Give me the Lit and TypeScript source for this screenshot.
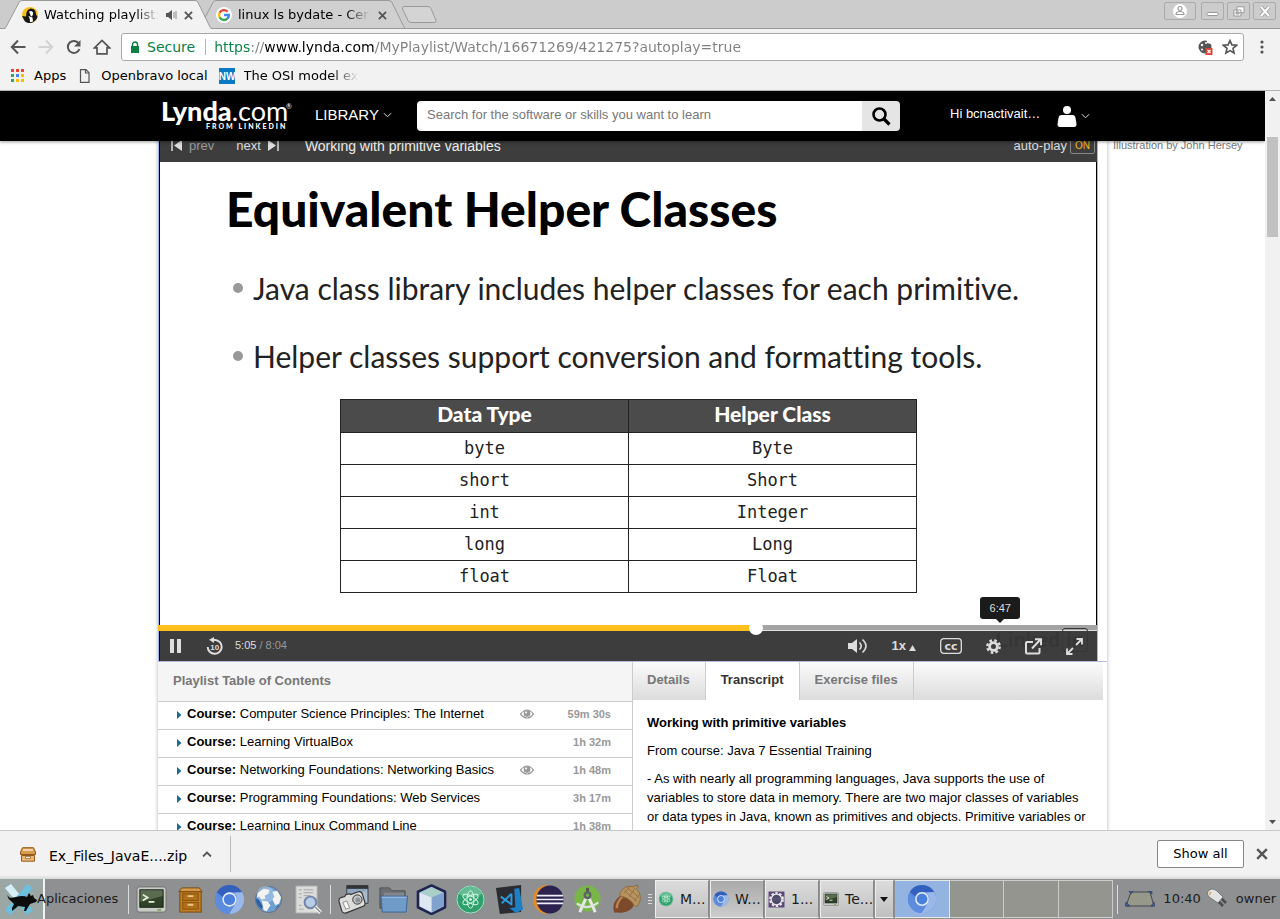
import { LitElement, html, css, svg, nothing } from "lit";
import { customElement } from "lit/decorators.js";

const chromium = svg`
  <circle cx="16" cy="16" r="15" fill="#5586db"/>
  <path d="M3 8.500A15 15 0 0 1 29 8.500L16 8.600A7.400 7.400 0 0 0 9.200 13.400z" fill="#3460bd"/>
  <path d="M29 8.500A15 15 0 0 1 15.500 31L22.400 19.700A7.400 7.400 0 0 0 20 9z" fill="#9bb8ea"/>
  <path d="M3 8.500A15 15 0 0 0 15.500 31L20 23 9 19z" fill="#5d8cdf"/>
  <circle cx="16" cy="16" r="7.400" fill="#e6edf9"/><circle cx="16" cy="16" r="5.800" fill="#4a80dc"/>`;

const terminal = svg`
  <rect x="1" y="3" width="30" height="26" rx="2.500" fill="#c9cbc6" stroke="#6f726c"/>
  <rect x="4" y="6" width="24" height="18" fill="#2f4127" stroke="#161d12"/>
  <path d="M4.500 6.500h23v6l-23 6z" fill="#5a6b50"/>
  <path d="M7 11l5 3-5 3M13 18.500h6" fill="none" stroke="#e8f2df" stroke-width="1.700"/>
  <rect x="22" y="26" width="4" height="1.500" fill="#7c9a3d"/>`;

const atom = svg`
  <circle cx="16" cy="16" r="14.500" fill="#2fa06c"/><circle cx="16" cy="16" r="14" fill="none" stroke="#b5dccb"/>
  <path d="M4 10a13.500 13.500 0 0 1 24 0q-12 8-24 0z" fill="#7cc9a4" opacity=".7"/>
  <g fill="none" stroke="#d4f5e5" stroke-width="1">
    <ellipse cx="16" cy="16" rx="3.500" ry="9"/>
    <ellipse cx="16" cy="16" rx="3.500" ry="9" transform="rotate(60 16 16)"/>
    <ellipse cx="16" cy="16" rx="3.500" ry="9" transform="rotate(120 16 16)"/>
  </g><circle cx="16" cy="16" r="1.300" fill="#fff"/>`;

const gearRing = svg`
  <rect x="1" y="1" width="30" height="30" fill="#5b4577"/>
  <circle cx="16" cy="16" r="11.500" fill="none" stroke="#e6e6e6" stroke-width="5" stroke-dasharray="4.500 2.720"/>
  <circle cx="16" cy="16" r="10" fill="#4d4769" stroke="#e6e6e6" stroke-width="2.500"/>
  <path d="M7 14h18M7 17h18" stroke="#6d6888"/>`;

const icons: Record<string, unknown> = {
  chromium, terminal, atom, gearRing,
  cabinet: svg`
    <path d="M7 4h18l3 4H4z" fill="#d49a4a" stroke="#7a4a0c"/>
    <rect x="5" y="8" width="22" height="21" fill="#c07d24" stroke="#7a4a0c"/>
    <rect x="8" y="10" width="16" height="7" fill="#b06e17" stroke="#8a560f"/>
    <rect x="8" y="19" width="16" height="7" fill="#b06e17" stroke="#8a560f"/>
    <path d="M13 12.500h6M13 21.500h6" stroke="#e8c890" stroke-width="2"/>`,
  globe: svg`
    <circle cx="16" cy="16" r="13.500" fill="#6f9fcf" stroke="#5f6f86"/>
    <circle cx="13" cy="11" r="9" fill="#a9c9e8" opacity=".6"/>
    <path d="M5 9l6-4 6 1-1 4-4 2 1 3-4 1-3-3-2 1zM9 17l6 1 3 4-4 6-3-1-1-5zM20 8l5-1 4 7-2 6-4 2-3-6 2-3z" fill="#f3f3f0"/>
    <path d="M3 15a13 13 0 0 0 6 11l1-3-4-7zM22 27a13 13 0 0 0 6-7l-3 3z" fill="#2b62a3"/>`,
  docSearch: svg`
    <path d="M4 2h22v28H4z" fill="#dcdddb" stroke="#a8a9a7"/>
    <path d="M7 6h3M7 10h3M7 14h3M12 6h10M12 9h10M12 12h7M7 22h3M7 26h5" stroke="#a4a6a5"/>
    <circle cx="19" cy="19" r="6" fill="#b9cde6" stroke="#6e84a8" stroke-width="2"/>
    <path d="M23.500 23.500l6 6" stroke="#fafafa" stroke-width="4"/><path d="M23.500 23.500l6 6" stroke="#8a8c8b" stroke-width="1.500"/>`,
  camera: svg`
    <path d="M9 1.500h22V20H9z" fill="#8fa7c0" stroke="#41464c"/><path d="M9 1.500h22V5H9z" fill="#333"/>
    <path d="M10 19L30 6v13z" fill="#a9bbcd"/>
    <path d="M1 18q-.5-3 2-4l4-1 1-2 4-1 1 1 8-3q3-.5 4 2l3 10q0 2-2 3L8 30q-3 .5-4-2z" fill="#dcdddb" stroke="#333" stroke-width="1.200"/>
    <circle cx="20" cy="16" r="4.800" fill="#c3c5c5" stroke="#333"/><circle cx="20.500" cy="16.500" r="2.600" fill="#8d9296"/>
    <path d="M5 19l4-1.500 3 7L8 26z" fill="#f6f6f6" stroke="#777" stroke-width=".8"/>`,
  folder: svg`
    <path d="M3 4h10l2 3h14v18H3z" fill="#6d7073" stroke="#505255"/>
    <path d="M7 9h21v6H7z" fill="#85888b"/>
    <path d="M4 12.500h27.500l-1.500 16.500H5.500z" fill="#6f9bc9" stroke="#3c6698"/><path d="M5 13.700h25.500" stroke="#a5c2e3"/>`,
  cube: svg`
    <path d="M16 1.500l14 6.500v16l-14 7-14-7V8z" fill="#a8c4da" stroke="#1f2450" stroke-width="2.600" stroke-linejoin="round"/>
    <path d="M16 3.500L27.500 8.500 16 14 4.500 8.500z" fill="#a9cfc8"/><path d="M16 14L28 9v14l-12 6z" fill="#7fa3cd"/>
    <path d="M16 14L4 9v14l12 6z" fill="#dfe8f2"/>`,
  vscode: svg`
    <path d="M2 4l26-3v28L6 31z" fill="#2b2c31"/>
    <path d="M21 5l5-1 4 22-7 4-7-5 6-1z" fill="#1e7fc4"/>
    <path d="M18 10v12M7 13l11 8M8 20l10-10" fill="none" stroke="#2f9be0" stroke-width="2"/>`,
  eclipse: svg`
    <path d="M15 1A15 15 0 0 0 15 31 17 17 0 0 1 15 1z" fill="#e58b22"/>
    <ellipse cx="17.500" cy="16" rx="14" ry="14.500" fill="#2b2250"/>
    <path d="M4 12h27M3.500 16h28M4 20h27" stroke="#efeef6" stroke-width="1.800"/>`,
  android: svg`
    <circle cx="16" cy="15" r="13.500" fill="#78b648"/>
    <path d="M8 29l7-16h2l7 16" fill="none" stroke="#e8eaea" stroke-width="3"/>
    <path d="M5 20q11 8 22-1" fill="none" stroke="#dfe2e2" stroke-width="2.300"/>
    <path d="M14.500 4h3v4h-3z" fill="#555"/><circle cx="16" cy="11.500" r="4" fill="#5c6468"/><circle cx="16" cy="11.500" r="1.600" fill="#78b648"/>`,
  acorn: svg`
    <path d="M12 11C5 14 1 21 3 28q.5 2 3 1.500C14 30 22 28 24 20z" fill="#7c4a2a"/>
    <path d="M12 13c-5 4-6 8-6 12" fill="none" stroke="#b98258" stroke-width="2.500"/>
    <path d="M9 11C11 4 17 1 23 3l4-2 1 2-2 2c5 4 6 12 1 18q-2 1-3-1Q20 15 12 13q-3 0-3-2z" fill="#b8935f" stroke="#8b6a3d"/>
    <path d="M14 7l13 11M17 4l12 10M13 10l6-7M19 13l6-9M24 18l5-7" stroke="#957246"/>`,
};

@customElement("app-root")
export class AppRoot extends LitElement {
  static styles = css`
    :host { display: flex; flex-direction: column; height: 100vh; overflow: hidden; background: #fff;
      font: 13px/16px "Liberation Sans", Arial, sans-serif; color: #000; }
    * { box-sizing: border-box; }
    button, input { font: inherit; color: inherit; border: 0; padding: 0; margin: 0; background: none; }
    svg { display: block; flex: none; }
    a { color: inherit; text-decoration: none; }
    h1, h2, h3, p, ul { margin: 0; padding: 0; font-weight: inherit; font-size: inherit; }
    ul { list-style: none; }

    .chrome, .downloads, .taskbar { font-family: "DejaVu Sans", sans-serif; }
    .chrome { flex: none; background: #f2f2f2; border-bottom: 1px solid #b2b2b2; }
    .strip { display: flex; height: 29px; background: #ccc; border-bottom: 1px solid #999; padding-left: 5px; }
    .tab { position: relative; display: flex; align-items: center; width: 206px; height: 29px; margin-right: -12px; padding: 1px 18px 0 17px; }
    .tab.active { z-index: 1; }
    .shape { position: absolute; inset: 0; width: 100%; height: 29px; }
    .tab > :not(.shape) { position: relative; }
    .title { flex: 1; margin-left: 6px; overflow: hidden; white-space: nowrap; text-align: left;
      mask-image: linear-gradient(to left, transparent 0, #000 24px); }
    .sound { margin: 0 7px; }
    .tab:not(.active) .close { margin-left: 8px; }
    .newtab { align-self: center; margin-left: 8px; }
    .winbtns { display: flex; gap: 3px; margin: 2px 4px 0 auto; }
    .winbtns button { width: 23px; height: 18px; display: grid; place-items: center; border: 1px solid #aaa; border-radius: 2px; }
    .winbtns .profile { width: 32px; margin-right: 2px; }
    .toolbar { display: flex; align-items: center; height: 36px; padding: 0 10px 0 9px; gap: 10px; }
    .omnibox { flex: 1; display: flex; align-items: center; height: 28px; padding: 0 5px 0 8px; background: #fff; border: 1px solid #a9a9a9; border-radius: 3px; }
    .secure { color: #0b8043; font-size: 14px; margin-left: 7px; padding-right: 10px; border-right: 1px solid #b5b5b5; }
    .url { flex: 1; font-size: 14px; height: 24px; margin-left: 8px; outline: 0; color: transparent; caret-color: #000;
      background: linear-gradient(to right, #0b8043 0 36px, #808080 36px 50px, #000 50px 161px, #808080 161px) text; }
    .omnibox svg + svg { margin-left: 9px; }
    .bookmarks { display: flex; align-items: center; height: 25px; padding: 0 10px 4px; gap: 11px; }
    .bookmarks a { display: flex; align-items: center; gap: 9px; white-space: nowrap; }
    .nw { font: bold 10px "Liberation Sans", sans-serif; }
    .fade { width: 114px; overflow: hidden; mask-image: linear-gradient(to left, transparent 0, #000 26px); }

    .view { flex: 1; min-height: 0; display: flex; }
    .page { flex: 1; min-width: 0; overflow: hidden; display: flex; flex-direction: column; }
    .site { position: relative; z-index: 2; flex: none; height: 50px; background: #000; color: #fff; display: grid; grid-template-columns: 1fr 949px 1fr; box-shadow: 0 1px 3px rgba(0,0,0,.4); }
    .sitein { grid-column: 2; display: flex; align-items: center; }
    .logo { margin: 0 25px 0 4px; width: 128px; font-family: Lato, sans-serif; }
    .logo svg { overflow: visible; }
    .library { display: flex; align-items: center; gap: 4px; width: 102px; font-size: 15px; margin-bottom: 2px; }
    .search { display: flex; flex: 0 1 483px; height: 30px; border-radius: 4px; overflow: hidden; }
    .search input { flex: 1; min-width: 0; padding: 0 10px 2px; background: #fff; color: #000; }
    .search input::placeholder { color: #777; }
    .search button { width: 38px; background: #e5e5e5; display: grid; place-items: center; }
    .user { display: flex; align-items: center; margin-left: 50px; }
    .user svg { margin-left: 17px; }
    .user svg + svg { margin-left: 4px; }
    .user span { margin-bottom: 4px; }

    .body { display: grid; grid-template-columns: 1fr 949px 1fr; margin-top: -13px; }
    .main { grid-column: 2; box-shadow: 0 0 4px rgba(0,0,0,.3); background: #fff; }
    .credit { padding: 9px 0 0 6px; font-size: 11px; color: #777; }
    .player { width: 940px; border: solid #a3b5ee; border-width: 0 1px; background: #3d3d3d; }
    .ptitle { display: flex; align-items: center; height: 34px; border-left: 1px solid #000; padding: 1px 2px 0 11px; color: #ddd; }
    .ptitle button { display: flex; align-items: center; gap: 6px; }
    .ptitle .prev { color: #999; margin-right: 22px; }
    .ptitle h1 { flex: 1; font-size: 14px; margin-left: 26px; color: #eee; }
    .on { font-size: 10px; line-height: 14px; color: #f9b91b; border: 1px solid #888; border-radius: 2px; padding: 0 4px; margin-left: 3px; }
    .slide { background: #fff; border: solid #000; border-width: 0 1px; padding: 19px 66px 32px 66px; font-family: Lato, sans-serif; color: #222; font-variant-ligatures: none; }
    .slide h2 { font-size: 48px; line-height: 56px; font-weight: 900; color: #000; white-space: nowrap; }
    .slide ul { display: flex; flex-direction: column; gap: 32px; margin-top: 33px; padding-left: 7px; }
    .slide li { display: flex; align-items: center; gap: 10px; font-size: 30px; line-height: 36px; white-space: nowrap; }
    .slide li::before { content: ""; width: 10px; height: 10px; border-radius: 50%; background: #999; }
    .slide table { width: 577px; margin: 25px 0 0 114px; border-collapse: collapse; table-layout: fixed; text-align: center; }
    .slide td { font: 17px/28px "DejaVu Sans Mono", monospace; }
    .slide th, .slide td { border: 1px solid #222; padding: 0 0 1px; height: 32px; line-height: 28px; }
    .slide th { background: #4b4b4b; color: #fff; font-size: 21px; font-weight: 900; height: 33px; padding-bottom: 4px; }
    .progress { position: relative; height: 6px; background: #a3a3a3; border-bottom: 1px solid #ddd; margin-left: -1px; }
    .played { height: 6px; background: #fdc01f; }
    .knob { position: absolute; top: -4px; width: 14px; height: 14px; margin-left: -7px; border-radius: 50%; background: #fff; }
    .tip { position: absolute; bottom: 11px; width: 40px; margin-left: -20px; text-align: center; background: #1b1b1b; color: #ddd; font-size: 11px; line-height: 22px; border-radius: 3px; }
    .tip::after { content: ""; position: absolute; left: 16px; top: 22px; border: 4px solid transparent; border-top-color: #1b1b1b; border-bottom: 0; }
    .controls { position: relative; display: flex; align-items: center; gap: 24px; height: 30px; padding: 0 14px 0 10px; color: #ddd; border-left: 1px solid #000; }
    .controls > :not(.mark) { position: relative; }
    .time { font-size: 11px; margin: 0 auto 0 -13px; padding-bottom: 2px; }
    .time span { color: #999; }
    .speed { display: flex; align-items: center; gap: 3px; font-weight: bold; }
    .speed svg { margin-top: 3px; }
    .controls > .mark { position: absolute; right: 9px; top: -3px; display: flex; align-items: center; gap: 2px; color: #363636; font-size: 20px; line-height: 22px; font-weight: bold; }
    .mark span + span { border: 1px solid #363636; border-radius: 3px; padding: 0 3px; }

    .panels { display: grid; grid-template-columns: 475px 1fr; border-top: 1px solid #b5bce0; }
    .toc { border-right: 1px solid #ccc; }
    .toc h2 { height: 40px; line-height: 38px; padding-left: 15px; background: #f5f5f5; border-bottom: 1px solid #ccc; color: #777; font-weight: bold; }
    .toc li { border-bottom: 1px solid #ccc; }
    .row { display: flex; align-items: center; width: 100%; height: 27px; padding: 0 21px 3px 18px; text-align: left; }
    .row svg:first-child { margin: 2px 5px 0 0; }
    .row > span { flex: 1; }
    .row time { width: 77px; text-align: right; font-size: 11px; font-weight: bold; color: #999; }
    .tabs { display: flex; height: 38px; margin-right: 4px; background: linear-gradient(#fbfbfb, #dcdcdc); }
    .tabs button { padding: 0 15px 2px; font-weight: bold; color: #777; border-right: 1px solid #ccc; }
    .tabs button:first-child { padding-left: 14px; }
    .tabs button.sel { background: #fff; color: #333; }
    .text { padding: 14px; line-height: 18px; }
    .text p { margin-top: 9px; line-height: 19px; width: 442px; }
    .text b { display: block; }

    .vscroll { flex: none; width: 15px; background: #f1f1f1; display: flex; flex-direction: column; align-items: center; padding: 5px 0; }
    .thumb { width: 11px; height: 100px; background: #c1c1c1; margin: 35px 0 auto; }

    .downloads { flex: none; display: flex; align-items: center; height: 49px; padding: 0 12px 2px 20px; border-top: 1px solid #c8c8c8;
      background: linear-gradient(#f2f2f2 44px, #d8d8d8); font-size: 14px; }
    .file { display: flex; align-items: center; height: 36px; padding-right: 17px; border-right: 1px solid #bbb; }
    .file span { margin: 3px 14px 0 13px; }
    .showall { margin-left: auto; margin-right: 12px; width: 87px; height: 28px; background: #fff; border: 1px solid #888; border-radius: 2px; font-size: 13px; }

    .taskbar { flex: none; display: flex; align-items: center; height: 40px; background: #8f9092; white-space: nowrap; overflow: hidden; color: #1c1c1c; }
    .menu { width: 119px; height: 40px; display: flex; align-items: center; background: linear-gradient(to right, #9ba7a4 43px, #f2f2f2 43px 45px, transparent 45px); }
    .sep { width: 1px; height: 29px; background: #ddd; margin: 0 9px; flex: none; }
    .launch { width: 39px; display: grid; place-items: center; flex: none; }
    .sep + .launch { margin-left: -6px; }
    .launch + .sep { margin-left: 3px; }
    .win { width: 54px; height: 38px; flex: none; display: flex; align-items: center; gap: 6px; padding-left: 2px; margin-right: 1px; background: linear-gradient(#dcdcdc, #c0c0c0); border: 1px solid #eee; border-right-color: #888; overflow: hidden; font-size: 14px; }
    .win.cur { background: linear-gradient(#aaa, #ccc); }
    .win.drop { width: 19px; padding-left: 4px; }
    .grip { width: 4px; height: 10px; margin: 0 3px 0 2px; flex: none; background: repeating-linear-gradient(#ddd 0 1px, #8f9092 1px 3px); }
    .pager { flex: 1; display: grid; grid-template-columns: repeat(4, 1fr); height: 38px; }
    .desk { background: #94958f; border: solid #ccc; border-width: 1px 1px 1px 0; display: grid; place-items: center; }
    .desk.cur { background: #93b3e0; border-color: #e8e8e8; }
    .sep.last { margin: 0 7px 0 4px; }
    .clock { margin: 0 5px 0 8px; }
    .owner { margin: 0 4px 0 6px; }
  `;

  private courses = [
    { name: "Computer Science Principles: The Internet", time: "59m 30s", seen: true },
    { name: "Learning VirtualBox", time: "1h 32m", seen: false },
    { name: "Networking Foundations: Networking Basics", time: "1h 48m", seen: true },
    { name: "Programming Foundations: Web Services", time: "3h 17m", seen: false },
    { name: "Learning Linux Command Line", time: "1h 38m", seen: false },
  ];

  private types = [["byte", "Byte"], ["short", "Short"], ["int", "Integer"], ["long", "Long"], ["float", "Float"]];

  private played = 63.7;
  private hovered = 89.7;

  private icon(name: string, size = 32) {
    return html`<svg width=${size} height=${size} viewBox="0 0 32 32">${icons[name]}</svg>`;
  }

  private cross(size = 9, color = "#555") {
    return html`<svg width=${size} height=${size} viewBox="0 0 10 10"><path d="M1 1l8 8M9 1l-8 8" stroke=${color} stroke-width="2"/></svg>`;
  }

  private chevron(dir: "up" | "down", w = 10) {
    return html`<svg width=${w} height="6" viewBox="0 0 10 6"><path d=${dir === "up" ? "M1 5.500l4-4 4 4" : "M1 1l4 4 4-4"} fill="none" stroke=${dir === "up" ? "#555" : "#ddd"} stroke-width=${dir === "up" ? 1.8 : 1.1}/></svg>`;
  }

  private tabShape(fill: string, active: boolean) {
    return html`<svg class="shape" viewBox="0 0 206 29" preserveAspectRatio="none">
      <path d="M0 29L1 27 14 2.500Q15 .5 17 .5H190Q192 .5 193 2.500L205 27 206 29z" fill=${fill}/>
      <path d="M0 28.500L1 27 14 2.500Q15 .5 17 .5H190Q192 .5 193 2.500L205 27 206 28.500" fill="none" stroke="#999"/>
      ${active ? nothing : svg`<path d="M0 28.500H206" stroke="#999"/>`}</svg>`;
  }

  private browser() {
    return html`<header class="chrome">
      <div class="strip">
        <div class="tab active">${this.tabShape("#f2f2f2", true)}
          <svg width="16" height="16" viewBox="0 0 16 16"><circle cx="8" cy="8" r="8" fill="#f7c117"/><path d="M0 9l4 .5Q4 2 9 1.500q5 0 5 6l1.500 2A8 8 0 0 1 3 14.500z" fill="#161616"/><path d="M7 4.500Q10 3 11 5.500q.5 3-2 4z" fill="#fff"/><path d="M6.500 9l4 1.500.5 4-3 .8q.5-3-1.500-6.300z" fill="#fff"/></svg>
          <span class="title">Watching playlist: Java</span>
          <svg class="sound" width="11" height="10" viewBox="0 0 11 10"><path d="M0 3h2l4-3v10L2 7H0z" fill="#555"/><path d="M8 2v6M10 1v8" stroke="#888"/></svg>
          <button class="close" aria-label="Close tab">${this.cross()}</button>
        </div>
        <div class="tab">${this.tabShape("#d0d0d0", false)}
          <svg width="16" height="16" viewBox="0 0 16 16"><circle cx="8" cy="8" r="8" fill="#fff"/><g fill="none" stroke-width="2.400"><path d="M11.500 4.600A5 5 0 0 0 3.600 5.700" stroke="#ea4335"/><path d="M3.600 5.700a5 5 0 0 0 0 4.600" stroke="#fbbc05"/><path d="M3.600 10.300A5 5 0 0 0 11.300 11.700" stroke="#34a853"/><path d="M11.300 11.700Q13 10.200 12.900 8H8" stroke="#4285f4"/></g></svg>
          <span class="title">linux ls bydate - Cerca</span>
          <button class="close" aria-label="Close tab">${this.cross()}</button>
        </div>
        <button class="newtab" aria-label="New tab"><svg width="36" height="17" viewBox="0 0 36 17"><path d="M3 .5H27q2 0 3 2l5 12q.5 2-1.500 2H10q-2 0-3-2L1.500 3Q1 .5 3 .5z" fill="#d4d4d4" stroke="#999"/></svg></button>
        <div class="winbtns">
          <button class="profile" aria-label="Profile"><svg width="14" height="14" viewBox="0 0 14 14"><circle cx="7" cy="7" r="7" fill="#fff"/><circle cx="7" cy="4.500" r="2" fill="none" stroke="#999" stroke-width="1.200"/><path d="M3 10.500Q3 7.500 7 7.500t4 3z" fill="none" stroke="#999" stroke-width="1.200"/></svg></button>
          <button aria-label="Minimize"><svg width="13" height="12" viewBox="0 0 13 12"><rect x="1" y="7.500" width="11" height="3" rx="1" fill="#fff" stroke="#999"/></svg></button>
          <button aria-label="Restore"><svg width="12" height="11" viewBox="0 0 12 11"><path d="M4 .8h7v6H4zM1 4h7v6H1z" fill="#fff" stroke="#999"/><path d="M3 6h3v2H3z" fill="#ccc" stroke="#999"/></svg></button>
          <button aria-label="Close"><svg width="12" height="11" viewBox="0 0 12 11"><path d="M2 1l8 9M10 1L2 10" stroke="#999" stroke-width="3.600"/><path d="M2 1l8 9M10 1L2 10" stroke="#fff" stroke-width="2"/></svg></button>
        </div>
      </div>
      <div class="toolbar">
        <button aria-label="Back"><svg width="18" height="16" viewBox="0 0 18 16"><path d="M9 1.500L2.800 8 9 14.500M3 8h13.500" fill="none" stroke="#555" stroke-width="2"/></svg></button>
        <button aria-label="Forward"><svg width="18" height="16" viewBox="0 0 18 16"><path d="M9 1.500L15.200 8 9 14.500M15 8H1.500" fill="none" stroke="#d3d3d3" stroke-width="2"/></svg></button>
        <button aria-label="Reload"><svg width="18" height="16" viewBox="0 0 18 16"><path d="M13.800 4.500A6 6 0 1 0 14.500 10" fill="none" stroke="#555" stroke-width="2"/><path d="M15.500 1v6.500H9z" fill="#555"/></svg></button>
        <button aria-label="Home"><svg width="18" height="16" viewBox="0 0 18 16"><path d="M1.500 8.800L9 1.500l7.500 7.300H14v6H4v-6z" fill="none" stroke="#555" stroke-width="1.700"/></svg></button>
        <label class="omnibox">
          <svg width="10" height="12" viewBox="0 0 10 12"><path d="M1 5h8v7H1z" fill="#0b8043"/><path d="M2.500 5V3.500a2.500 2.500 0 0 1 5 0V5" fill="none" stroke="#0b8043" stroke-width="1.400"/></svg>
          <span class="secure">Secure</span>
          <input class="url" type="text" aria-label="Address" spellcheck="false" .value=${"https://www.lynda.com/MyPlaylist/Watch/16671269/421275?autoplay=true"}>
          <svg width="15" height="15" viewBox="0 0 15 15"><circle cx="7" cy="7" r="6.500" fill="#555"/><circle cx="4" cy="5" r="1.200" fill="#fff"/><circle cx="8" cy="3" r="1" fill="#fff"/><circle cx="4" cy="9.500" r="1" fill="#fff"/><path d="M9 0h4v4L9 3z" fill="#fff"/><rect x="7.500" y="8" width="7" height="7" fill="#dc4437"/><path d="M9.500 10l3 3M12.500 10l-3 3" stroke="#fff" stroke-width="1.200"/></svg>
          <svg width="16" height="16" viewBox="0 0 16 16"><path d="M8 1.600l1.900 4.300 4.700.4-3.600 3.100 1.100 4.600L8 11.600 3.900 14 5 9.400 1.400 6.300l4.700-.4z" fill="none" stroke="#555" stroke-width="1.600"/></svg>
        </label>
        <button aria-label="Menu"><svg width="16" height="14" viewBox="0 0 16 14"><g fill="#555"><circle cx="8" cy="2" r="1.600"/><circle cx="8" cy="7" r="1.600"/><circle cx="8" cy="12" r="1.600"/></g></svg></button>
      </div>
      <nav class="bookmarks">
        <a href="#"><svg width="15" height="13" viewBox="0 0 15 13"><path d="M1 0h3v3H1zM6 0h3v3H6zM11 0h3v3h-3z" fill="#ea4335"/><path d="M1 5h3v3H1zM1 10h3v3H1z" fill="#34a853"/><path d="M6 5h3v3H6z" fill="#4285f4"/><path d="M11 5h3v3h-3zM6 10h3v3H6zM11 10h3v3h-3z" fill="#fbbc05"/></svg>Apps</a>
        <a href="#"><svg width="15" height="14" viewBox="0 0 15 14"><path d="M3.500.7H9l3 3v9.600H3.500zM8.500.7V4H12" fill="none" stroke="#555" stroke-width="1.200"/></svg>Openbravo local</a>
        <a href="#"><svg width="16" height="16" viewBox="0 0 16 16"><rect width="16" height="16" fill="#0a78c2"/><text class="nw" x="8" y="12" text-anchor="middle" fill="#fff">NW</text></svg><span class="fade">The OSI model explained</span></a>
      </nav>
    </header>`;
  }

  private player() {
    return html`<section class="player">
      <div class="ptitle">
        <button class="prev"><svg width="12" height="11" viewBox="0 0 12 11"><path d="M1 0v11" stroke="#ddd" stroke-width="1.500"/><path d="M11 0v11L3 5.500z" fill="#ddd"/></svg>prev</button>
        <button>next<svg width="12" height="11" viewBox="0 0 12 11"><path d="M11 0v11" stroke="#ddd" stroke-width="1.500"/><path d="M1 0v11l8-5.500z" fill="#ddd"/></svg></button>
        <h1>Working with primitive variables</h1>
        <span>auto-play</span><button class="on">ON</button>
      </div>
      <div class="slide">
        <h2>Equivalent Helper Classes</h2>
        <ul>
          <li>Java class library includes helper classes for each primitive.</li>
          <li>Helper classes support conversion and formatting tools.</li>
        </ul>
        <table>
          <thead><tr><th>Data Type</th><th>Helper Class</th></tr></thead>
          <tbody>${this.types.map(([a, b]) => html`<tr><td>${a}</td><td>${b}</td></tr>`)}</tbody>
        </table>
      </div>
      <div class="progress">
        <div class="played" style="width:${this.played}%"></div>
        <div class="knob" style="left:${this.played}%"></div>
        <div class="tip" style="left:${this.hovered}%">6:47</div>
      </div>
      <div class="controls">
        <div class="mark"><span>Linked</span><span>in</span></div>
        <button aria-label="Pause"><svg width="12" height="14" viewBox="0 0 12 14"><path d="M0 0h4v14H0zM7 0h4v14H7z" fill="#ddd"/></svg></button>
        <button aria-label="Back 10 seconds"><svg width="18" height="18" viewBox="0 0 18 18"><path d="M5 2.900h4.500a7 7 0 1 1-7.800 7" fill="none" stroke="#ddd" stroke-width="2"/><path d="M3 2.800L8 0v6z" fill="#ddd"/><text x="8.800" y="13" text-anchor="middle" font-size="8" font-weight="bold" fill="#ddd">10</text></svg></button>
        <div class="time">5:05 <span>/ 8:04</span></div>
        <button aria-label="Volume"><svg width="20" height="16" viewBox="0 0 20 16"><path d="M0 5h4l5-4v14l-5-4H0z" fill="#ddd"/><path d="M11.500 4.500q3.500 3.500 0 7M14.500 1.500q7 6.500 0 13" fill="none" stroke="#ddd" stroke-width="1.600"/></svg></button>
        <button class="speed">1x<svg width="7" height="6" viewBox="0 0 7 6"><path d="M0 6l3.500-6L7 6z" fill="#ddd"/></svg></button>
        <button aria-label="Captions"><svg width="22" height="16" viewBox="0 0 22 16"><rect x=".7" y=".7" width="20.600" height="14.600" rx="3" fill="none" stroke="#ddd" stroke-width="1.300"/><text x="11" y="11.500" text-anchor="middle" font-size="11" font-weight="bold" fill="#ddd" font-family="DejaVu Sans">cc</text></svg></button>
        <button aria-label="Settings"><svg width="15" height="15" viewBox="0 0 15 15"><circle cx="7.500" cy="7.500" r="6.200" fill="none" stroke="#ddd" stroke-width="2.400" stroke-dasharray="2.600 2.269"/><circle cx="7.500" cy="7.500" r="3.900" fill="none" stroke="#ddd" stroke-width="2.800"/></svg></button>
        <button aria-label="Pop out"><svg width="17" height="17" viewBox="0 0 17 17"><path d="M8 4H2q-1 0-1 1v9.500q0 1 1 1h11.500q1 0 1-1V10M7 10.500l8-8.500M10 1.200h6v6" fill="none" stroke="#ddd" stroke-width="2"/></svg></button>
        <button aria-label="Full screen"><svg width="17" height="17" viewBox="0 0 17 17"><path d="M10 7L15.500 1.500M7 10L1.500 15.500M10.500 1H16v5.500M1 10.500V16h5.500" fill="none" stroke="#ddd" stroke-width="1.800"/></svg></button>
      </div>
    </section>`;
  }

  private page() {
    return html`<div class="page">
      <header class="site"><div class="sitein">
        <a class="logo" href="#" aria-label="Lynda.com from LinkedIn"><svg width="129" height="30" viewBox="0 0 129 30" fill="#fff">
          <text x="-1" y="20" font-size="27"><tspan font-weight="900">Lynda</tspan>.com</text>
          <text x="44" y="28" font-size="7" font-weight="900" letter-spacing="2">FROM LINKEDIN</text>
          <text x="124" y="8" font-size="7">®</text></svg></a>
        <button class="library">LIBRARY ${this.chevron("down", 9)}</button>
        <form class="search"><input type="search" aria-label="Search" placeholder="Search for the software or skills you want to learn">
          <button type="button" aria-label="Search"><svg width="19" height="19" viewBox="0 0 19 19"><circle cx="7.500" cy="7.500" r="6" fill="none" stroke="#000" stroke-width="2.600"/><path d="M12 12l5.500 5.500" stroke="#000" stroke-width="3.200"/></svg></button></form>
        <button class="user"><span>Hi bcnactivait…</span>
          <svg width="20" height="21" viewBox="0 0 20 21"><circle cx="10" cy="4" r="4" fill="#fff"/><path d="M4.500 9h11q2.500 0 3 3l1 6q.2 3-2.500 3H3q-2.700 0-2.500-3l1-6q.5-3 3-3z" fill="#fff"/></svg>
          ${this.chevron("down", 9)}</button>
      </div></header>
      <div class="body">
        <main class="main">
          ${this.player()}
          <div class="panels">
            <section class="toc"><h2>Playlist Table of Contents</h2><ul>
              ${this.courses.map((c) => html`<li><button class="row">
                <svg width="6" height="8" viewBox="0 0 6 8"><path d="M1 0l4.500 4L1 8z" fill="#1b6a96"/></svg>
                <span><b>Course:</b> ${c.name}</span>
                ${c.seen ? html`<svg width="14" height="10" viewBox="0 0 14 10"><path d="M.5 5Q7-3 13.500 5 7 13 .5 5z" fill="none" stroke="#999" stroke-width="1.200"/><circle cx="7" cy="4.500" r="3.300" fill="#999"/><circle cx="6" cy="3.500" r="1" fill="#fff"/></svg>` : nothing}
                <time>${c.time}</time></button></li>`)}
            </ul></section>
            <section>
              <div class="tabs"><button>Details</button><button class="sel">Transcript</button><button>Exercise files</button></div>
              <div class="text"><b>Working with primitive variables</b>
                <p>From course: Java 7 Essential Training</p>
                <p>- As with nearly all programming languages, Java supports the use of variables to store data in memory. There are two major classes of variables or data types in Java, known as primitives and objects. Primitive variables or</p></div>
            </section>
          </div>
        </main>
        <aside class="credit">Illustration by John Hersey</aside>
      </div>
    </div>
    <div class="vscroll">
      <svg width="7" height="6" viewBox="0 0 7 6"><path d="M0 5l3.500-4L7 5z" fill="#505050"/></svg>
      <div class="thumb"></div>
      <svg width="7" height="6" viewBox="0 0 7 6"><path d="M0 1l3.500 4L7 1z" fill="#505050"/></svg>
    </div>`;
  }

  private launchers(names: string[]) {
    return names.map((n) => html`<button class="launch" aria-label=${n}>${this.icon(n, 31)}</button>`);
  }

  render() {
    return html`${this.browser()}
      <div class="view">${this.page()}</div>
      <footer class="downloads">
        <button class="file">
          <svg width="16" height="15" viewBox="0 0 16 15"><path d="M2.500.7h11l2 4.300v2.500H.5V5z" fill="#d99b4e" stroke="#96591a"/><path d="M1.500 8.500h13v5.700h-13z" fill="#e9b877" stroke="#96591a"/><path d="M3 3h10" stroke="#f8e7cf" stroke-width="1.500"/><path d="M5.500 9.500h5v2h-5z" fill="#fff" stroke="#96591a" stroke-width=".7"/></svg>
          <span>Ex_Files_JavaE....zip</span>${this.chevron("up", 12)}</button>
        <button class="showall">Show all</button>
        <button aria-label="Close downloads">${this.cross(12)}</button>
      </footer>
      <footer class="taskbar">
        <button class="menu"><svg width="37" height="34" viewBox="0 0 37 34"><path d="M5 6l6-4 8 10 8-10 6 4-9 11 9 11-6 5-8-10-8 10-6-5 9-11z" fill="#6cc0de"/><path d="M5 6l6-4 8 10-5 5z" fill="#d7eef6"/><path d="M7 13l3 3 6-1q7-2 11 0l2-4 2 3 2-1 1 3 3 2-1 2-6 2-3 5-1 2h-2l1-4-7-1-2 2-4 3v-3l2-4-3-3q-3-2-4-6z" fill="#0d0d0d"/></svg>Aplicaciones</button>
        <span class="sep"></span>
        ${this.launchers(["terminal", "cabinet", "chromium", "globe", "docSearch"])}
        <span class="sep"></span>
        ${this.launchers(["camera", "folder", "cube", "atom", "vscode", "eclipse", "android", "acorn"])}
        <span class="grip"></span>
        <button class="win">${this.icon("atom", 16)}M...</button>
        <button class="win cur">${this.icon("chromium", 16)}W...</button>
        <button class="win">${this.icon("gearRing", 17)}1...</button>
        <button class="win">${this.icon("terminal", 16)}Te...</button>
        <button class="win drop" aria-label="More windows"><svg width="8" height="5" viewBox="0 0 8 5"><path d="M0 0h8L4 5z" fill="#111"/></svg></button>
        <div class="pager"><div class="desk cur">${this.icon("chromium", 30)}</div><div class="desk"></div><div class="desk"></div><div class="desk"></div></div>
        <span class="sep last"></span>
        <svg width="30" height="16" viewBox="0 0 30 16"><path d="M6 1h19l4 14H1z" fill="#96998a" stroke="#41454d"/><g fill="#43609c" stroke="#26355a" stroke-width=".6"><path d="M4 0h4l-2 3zM23 0h4v3zM0 15l1-4 4 4zM26 15l3-4 1 4z"/></g></svg>
        <span class="clock">10:40</span>
        <svg width="24" height="24" viewBox="0 0 24 24"><path d="M2 4q4-4 9 0l6 6-5 6-9-6q-3-3-1-6z" fill="#e4e4e4" stroke="#777"/><path d="M5 5q-2 2-1 3" stroke="#d8a94b" stroke-width="1.500" fill="none"/><path d="M16 12l4 4M13 15l4 4" stroke="#4b4b4b" stroke-width="2.500"/></svg>
        <span class="owner">owner</span>
      </footer>`;
  }
}
